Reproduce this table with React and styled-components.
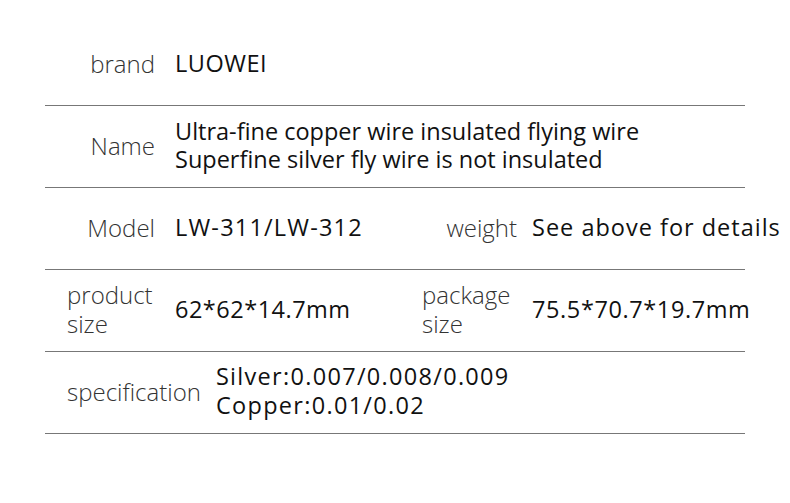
import React from 'react';
import styled, { createGlobalStyle } from 'styled-components';

const GlobalStyle = createGlobalStyle`
  body {
    margin: 0;
    background: #fff;
    font-family: "Open Sans", "Noto Sans", sans-serif;
  }
`;

const Sheet = styled.div`
  width: 790px;
  height: 503px;
  padding-top: 24px;
  box-sizing: border-box;
`;

const Table = styled.div`
  margin-left: 45px;
  width: 700px;
`;

const Row = styled.div`
  display: grid;
  grid-template-columns: 377px 1fr;
  align-items: center;
  box-sizing: border-box;
  height: 82px;
  padding-bottom: 3px;
  border-bottom: 1px solid #777;
`;

const Cell = styled.div`
  display: flex;
  align-items: center;
  gap: ${ p => p.gap || 20 }px;
  padding-left: ${ p => p.indent || 0 }px;
  white-space: nowrap;
`;

const Label = styled.div`
  flex: none;
  width: ${ p => (p.width ? `${ p.width }px` : 'auto') };
  text-align: ${ p => p.align || 'right' };
  white-space: normal;
  font-size: 24px;
  font-weight: 300;
  line-height: 29px;
  color: #333;
`;

const Value = styled.div`
  font-size: 23.5px;
  font-weight: 400;
  line-height: ${ p => p.lh || 28 }px;
  letter-spacing: ${ p => p.spacing || 0 }px;
  color: #111;
`;

const App = () => (
  <Sheet>
    <GlobalStyle />
    <Table>
      <Row>
        <Cell>
          <Label width={110}>brand</Label>
          <Value spacing={0.5}>LUOWEI</Value>
        </Cell>
      </Row>
      <Row>
        <Cell>
          <Label width={110}>Name</Label>
          <Value>
            Ultra-fine copper wire insulated flying wire<br />
            Superfine silver fly wire is not insulated
          </Value>
        </Cell>
      </Row>
      <Row>
        <Cell>
          <Label width={110}>Model</Label>
          <Value spacing={1.2}>LW-311/LW-312</Value>
        </Cell>
        <Cell gap={15}>
          <Label width={95}>weight</Label>
          <Value spacing={1}>See above for details</Value>
        </Cell>
      </Row>
      <Row>
        <Cell indent={22}>
          <Label width={88} align="left">product size</Label>
          <Value spacing={0.5}>62*62*14.7mm</Value>
        </Cell>
        <Cell gap={15}>
          <Label width={95} align="left">package size</Label>
          <Value spacing={0.6}>75.5*70.7*19.7mm</Value>
        </Cell>
      </Row>
      <Row>
        <Cell indent={22} gap={15}>
          <Label>specification</Label>
          <Value spacing={1.3} lh={29}>
            Silver:0.007/0.008/0.009<br />
            Copper:0.01/0.02
          </Value>
        </Cell>
      </Row>
    </Table>
  </Sheet>
);

export default App;
